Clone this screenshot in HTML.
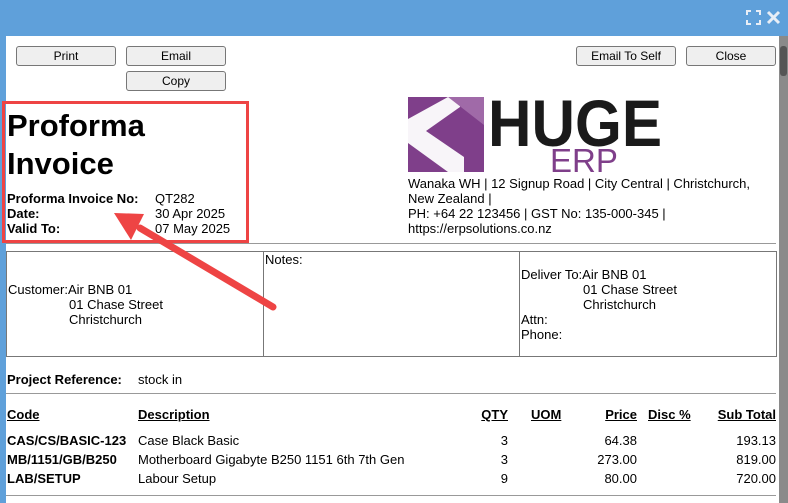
<!DOCTYPE html>
<html><head><style>
*{margin:0;padding:0;box-sizing:border-box}
body{width:788px;height:503px;overflow:hidden;background:#5fa0da;font-family:"Liberation Sans",Arial,sans-serif;color:#000;position:relative}
.a{position:absolute;white-space:nowrap}
#page{position:absolute;left:6px;top:36px;width:773px;height:467px;background:#fff}
#sb{position:absolute;left:779px;top:36px;width:9px;height:467px;background:#8a8a8a}
.btn{position:absolute;height:20px;width:100px;background:#efefef;border:1px solid #777;border-radius:3px;font-size:12px;text-align:center;line-height:18px}
.t13{font-size:13px}
.b{font-weight:bold}
.hl{position:absolute;height:1px;background:#999}
u{text-decoration:underline}
</style></head><body>
<div id="page"></div>
<div id="sb"><div style="position:absolute;left:1px;top:10px;width:7px;height:30px;background:#555;border-radius:3px"></div></div>
<svg class="a" style="left:746px;top:10px" width="36" height="16" viewBox="0 0 36 16">
<g fill="none" stroke="#e8eef6" stroke-width="2"><path d="M1 5V1h4M10 1h4v4M14 10v4h-4M5 14H1v-4"/></g>
<path d="M22 2l11 11M33 2L22 13" stroke="#e8eef6" stroke-width="3"/></svg>
<div class="btn" style="left:16px;top:46px">Print</div>
<div class="btn" style="left:126px;top:46px">Email</div>
<div class="btn" style="left:126px;top:71px">Copy</div>
<div class="btn" style="left:576px;top:46px">Email To Self</div>
<div class="btn" style="left:686px;top:46px;width:90px">Close</div>

<div class="a b" style="left:7px;top:107px;font-size:31px;line-height:38px">Proforma<br>Invoice</div>
<div class="a b t13" style="left:7px;top:191px;line-height:15px">Proforma Invoice No:<br>Date:<br>Valid To:</div>
<div class="a t13" style="left:155px;top:191px;line-height:15px">QT282<br>30 Apr 2025<br>07 May 2025</div>
<div class="a" style="left:2px;top:101px;width:247px;height:142px;border:3px solid #ee4444"></div>

<svg class="a" style="left:408px;top:97px" width="260" height="76">
<rect x="0" y="0" width="76" height="75" fill="#7f3f8a"/>
<path d="M0 22 L40 0 L52 0 L52 10 L18 34 L56 60 L56 75 L40 75 L0 46Z" fill="#fff" opacity=".95"/>
<path d="M40 0 L76 0 L76 28 Z" fill="#a06aa8"/>
<text x="80" y="49" font-family="Liberation Sans" font-weight="bold" font-size="66" fill="#1a1a1a" textLength="174" lengthAdjust="spacingAndGlyphs">HUGE</text>
<text x="142" y="75" font-family="Liberation Sans" font-size="33" fill="#7f3f8a">ERP</text>
</svg>
<div class="a t13" style="left:408px;top:176px;line-height:15px">Wanaka WH | 12 Signup Road | City Central | Christchurch,<br>New Zealand |<br>PH: +64 22 123456 | GST No: 135-000-345 |<br>https://erpsolutions.co.nz</div>

<div class="hl" style="left:6px;top:243px;width:770px"></div>
<div class="a" style="left:6px;top:251px;width:771px;height:106px;border:1px solid #777"></div>
<div class="a" style="left:263px;top:251px;width:1px;height:106px;background:#777"></div>
<div class="a" style="left:519px;top:251px;width:1px;height:106px;background:#777"></div>
<div class="a t13" style="left:8px;top:282px;line-height:15px">Customer:Air BNB 01</div>
<div class="a t13" style="left:69px;top:297px;line-height:15px">01 Chase Street<br>Christchurch</div>
<div class="a t13" style="left:265px;top:252px">Notes:</div>
<div class="a t13" style="left:521px;top:267px;line-height:15px">Deliver To:Air BNB 01</div>
<div class="a t13" style="left:583px;top:282px;line-height:15px">01 Chase Street<br>Christchurch</div>
<div class="a t13" style="left:521px;top:312px;line-height:15px">Attn:<br>Phone:</div>

<div class="a t13" style="left:7px;top:372px"><b>Project Reference:</b></div>
<div class="a t13" style="left:138px;top:372px">stock in</div>
<div class="hl" style="left:6px;top:393px;width:770px"></div>

<div class="a t13 b" style="left:7px;top:407px"><u>Code</u></div>
<div class="a t13 b" style="left:138px;top:407px"><u>Description</u></div>
<div class="a t13 b" style="right:280px;top:407px"><u>QTY</u></div>
<div class="a t13 b" style="left:531px;top:407px"><u>UOM</u></div>
<div class="a t13 b" style="right:151px;top:407px"><u>Price</u></div>
<div class="a t13 b" style="left:648px;top:407px"><u>Disc %</u></div>
<div class="a t13 b" style="right:12px;top:407px"><u>Sub Total</u></div>

<div class="a t13 b" style="left:7px;top:431px;line-height:19px">CAS/CS/BASIC-123<br>MB/1151/GB/B250<br>LAB/SETUP</div>
<div class="a t13" style="left:138px;top:431px;line-height:19px">Case Black Basic<br>Motherboard Gigabyte B250 1151 6th 7th Gen<br>Labour Setup</div>
<div class="a t13" style="right:280px;top:431px;line-height:19px;text-align:right">3<br>3<br>9</div>
<div class="a t13" style="right:151px;top:431px;line-height:19px;text-align:right">64.38<br>273.00<br>80.00</div>
<div class="a t13" style="right:12px;top:431px;line-height:19px;text-align:right">193.13<br>819.00<br>720.00</div>
<div class="hl" style="left:6px;top:495px;width:770px"></div>

<svg class="a" style="left:0;top:0" width="788" height="503">
<line x1="273" y1="307" x2="140" y2="228" stroke="#ee4444" stroke-width="7" stroke-linecap="round"/>
<polygon points="114,213 144,214 131,240" fill="#ee4444"/>
</svg>
</body></html>
